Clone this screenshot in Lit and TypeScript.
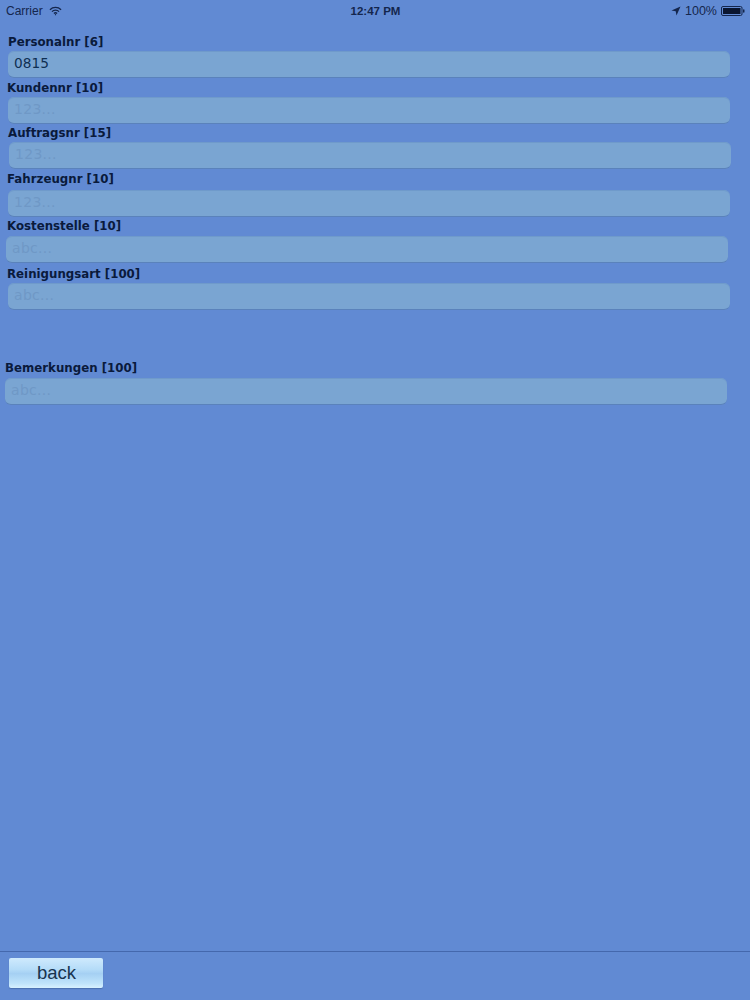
import { LitElement, html, css } from "lit";
import { customElement } from "lit/decorators.js";

interface Field { label: string; value?: string; ph?: string; labelX: number; labelTop: number; inputX: number; inputTop: number; }

const fields: Field[] = [
  { label: "Personalnr [6]", value: "0815", labelX: 8, labelTop: 34, inputX: 8, inputTop: 51 },
  { label: "Kundennr [10]", ph: "123...", labelX: 7, labelTop: 80, inputX: 8, inputTop: 97 },
  { label: "Auftragsnr [15]", ph: "123...", labelX: 8, labelTop: 125, inputX: 9, inputTop: 142 },
  { label: "Fahrzeugnr [10]", ph: "123...", labelX: 7, labelTop: 171, inputX: 8, inputTop: 190 },
  { label: "Kostenstelle [10]", ph: "abc...", labelX: 7, labelTop: 218, inputX: 6, inputTop: 236 },
  { label: "Reinigungsart [100]", ph: "abc...", labelX: 7, labelTop: 266, inputX: 8, inputTop: 283 },
  { label: "Bemerkungen [100]", ph: "abc...", labelX: 5, labelTop: 360, inputX: 5, inputTop: 378 },
];
const LABEL_H = 16;
const INPUT_H = 26.5;

@customElement("app-root")
export class AppRoot extends LitElement {
  static styles = css`
    :host { display: flex; flex-direction: column; width: 750px; height: 1000px; background: #618ad3; overflow: hidden; font-family: "DejaVu Sans", sans-serif; color: #0b1d40; }
    .status { flex: none; height: 21px; display: grid; grid-template-columns: 1fr auto 1fr; align-items: center; padding: 0 5px 0 6px; font-family: "Liberation Sans", sans-serif; font-size: 12px; color: #14264d; }
    .left { display: flex; align-items: center; gap: 6px; }
    .time { font-weight: 700; font-size: 11.5px; }
    .right { display: flex; align-items: center; justify-content: flex-end; gap: 4px; font-size: 12.5px; }
    .form { flex: 1; display: flex; flex-direction: column; }
    .label { font-weight: 700; font-size: 11.8px; line-height: 16px; height: 16px; white-space: nowrap; color: #0a1a3c; }
    .input { box-sizing: border-box; width: 722px; height: 26.5px; border-radius: 6px; background: #7aa5d2; border-bottom: 1px solid #5a82bb; box-shadow: inset 0 1px 0 #6f9acb; display: flex; align-items: center; padding: 0 0 2px 6px; font-size: 14px; }
    .val { color: #0f2f52; font-size: 13.7px; }
    .ph { color: #6f98c6; letter-spacing: 0.3px; }
    .bar { flex: none; box-sizing: border-box; height: 49px; border-top: 1px solid #4468ad; display: flex; align-items: flex-start; padding-left: 9px; padding-top: 6px; }
    .back { box-sizing: border-box; width: 94px; height: 30px; padding-left: 1px; border-radius: 2px; display: flex; align-items: center; justify-content: center; font-family: "Liberation Sans", sans-serif; font-size: 18.5px; color: #17344f; background: linear-gradient(#cfeafd 0%, #b5dcf8 38%, #a5d0f3 52%, #bfe4fb 85%, #d7f1ff 100%); box-shadow: 0 1px 1px #4a6fb0; }
    svg { display: block; }
  `;

  render() {
    return html`
      <div class="status">
        <div class="left">
          <span>Carrier</span>
          <svg width="13" height="10" viewBox="0 0 14 10" fill="none" stroke="#14264d" stroke-width="1.4">
            <path d="M1 3.6a8.6 8.6 0 0 1 12 0" />
            <path d="M3.2 5.7a5.4 5.4 0 0 1 7.6 0" />
            <path d="M5.3 7.7a2.5 2.5 0 0 1 3.4 0" />
            <circle cx="7" cy="9" r=".7" fill="#14264d" stroke="none" />
          </svg>
        </div>
        <div class="time">12:47 PM</div>
        <div class="right">
          <svg width="10" height="10" viewBox="0 0 10 10"><path d="M9.5.5 .5 4.6l4.2.7.8 4.2z" fill="#14264d" /></svg>
          <span>100%</span>
          <svg width="24" height="10" viewBox="0 0 24 10">
            <rect x=".5" y=".5" width="20.5" height="9" rx="1.5" fill="none" stroke="#14264d" />
            <rect x="2" y="2" width="17.5" height="6" fill="#0b1630" />
            <rect x="22" y="3.2" width="1.5" height="3.6" rx=".7" fill="#14264d" />
          </svg>
        </div>
      </div>
      <div class="form">
        ${fields.map((f, i) => {
          const prevEnd = i === 0 ? 21 : fields[i - 1].inputTop + INPUT_H;
          const labelGap = f.labelTop - prevEnd;
          const inputGap = f.inputTop - f.labelTop - LABEL_H;
          return html`
            <div class="label" style="margin-left:${f.labelX}px;margin-top:${labelGap}px">${f.label}</div>
            <div class="input" style="margin-left:${f.inputX}px;margin-top:${inputGap}px">
              ${f.value ? html`<span class="val">${f.value}</span>` : html`<span class="ph">${f.ph}</span>`}
            </div>`;
        })}
      </div>
      <div class="bar"><div class="back">back</div></div>
    `;
  }
}
